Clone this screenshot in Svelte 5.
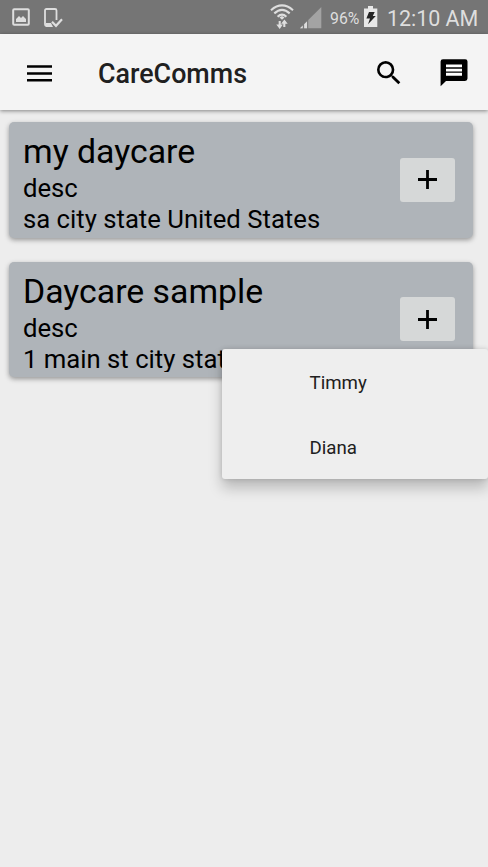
<script>
  const daycares = [
    { name: 'my daycare', description: 'desc', address: 'sa city state United States' },
    { name: 'Daycare sample', description: 'desc', address: '1 main st city state United States', children: ['Timmy', 'Diana'] }
  ];
</script>

<div class="screen">
  <div class="status">
    <svg class="picture" width="18" height="18" viewBox="0 0 18 18">
      <rect x="1.2" y="1.2" width="15.6" height="15.6" rx="1" fill="none" stroke="currentColor" stroke-width="2" />
      <path d="M4 14v-3l3-3 2 2 2-2 3 3v3z" fill="currentColor" />
    </svg>
    <svg class="device" width="20" height="20" viewBox="0 0 20 20">
      <path d="M7.5 18H3Q1 18 1 16V2.5Q1 1 2.5 1H11Q12.5 1 12.5 2.5V12" fill="none" stroke="currentColor" stroke-width="1.8" />
      <path d="M2 15h5l2 4H2z" fill="currentColor" />
      <path d="M8 13.8l4 4 6-6.6" fill="none" stroke="currentColor" stroke-width="2.2" />
    </svg>
    <span class="grow"></span>
    <svg class="wifi" width="24" height="26" viewBox="0 0 24 26">
      <g fill="none" stroke="currentColor" stroke-width="2.1">
        <path d="M1 6.2Q12-3.4 23 6.2M4.3 9.4Q12 2.4 19.7 9.4M7.6 12.7Q12 8.6 16.4 12.7" />
        <path d="M9.7 17v6M14.3 23v-6" />
      </g>
      <path d="M9.5 13.6l2.5-1.7 2.5 1.7-2.5 2.2z" fill="currentColor" />
      <path d="M6.3 20.6h6.6L9.7 25zM11.1 19.7h6.6l-3.3-4.2z" fill="currentColor" />
    </svg>
    <svg class="signal" width="22" height="22" viewBox="0 0 22 22">
      <path d="M21.3 0v21.2H0z" fill="#a3a3a3" />
      <path d="M0 21.2L2.8 18.4v2.8zM4.2 21.2v-4l2.8-2.8v6.8z" fill="#ddd" />
      <path d="M3.4 17v5M7.7 13v9" stroke="#777" />
    </svg>
    <span class="percent">96%</span>
    <svg class="battery" width="14" height="22" viewBox="0 0 14 22">
      <path d="M4 0h5v2.5h4.3V21H0V2.5h4z" fill="#e8e8e8" />
      <path d="M5 6h5.7L8.8 10h3L4 18.3 6 12.5H2.4z" fill="#242424" />
    </svg>
    <span class="clock">12:10 AM</span>
  </div>

  <header>
    <svg class="menu" width="25" height="17" viewBox="0 0 25 17"><path d="M0 1.5h25M0 8.5h25M0 15.3h25" stroke="#000" stroke-width="2.6" /></svg>
    <h1>CareComms</h1>
    <span class="grow"></span>
    <svg class="search" width="32" height="32" viewBox="0 0 24 24"><path d="M15.5 14h-.79l-.28-.27A6.471 6.471 0 0 0 16 9.5 6.5 6.5 0 1 0 9.5 16c1.61 0 3.09-.59 4.23-1.57l.27.28v.79l5 4.99L20.49 19l-4.99-5zm-6 0C7.01 14 5 11.99 5 9.5S7.01 5 9.5 5 14 7.01 14 9.5 11.99 14 9.5 14z" /></svg>
    <svg class="chat" width="28" height="28" viewBox="0 0 28 28">
      <path d="M3 .3h22.2Q27.5.3 27.5 2.6v17Q27.5 22 25 22H6L.6 27.2V2.6Q.6.3 3 .3z" />
      <path d="M6 6.9h16M6 11.1h16M6 15.3h16" stroke="#fff" stroke-width="2.9" />
    </svg>
  </header>

  <main>
    {#each daycares as daycare}
      <article>
        <div class="details">
          <h2>{daycare.name}</h2>
          <p>{daycare.description}</p>
          <p class="address">{daycare.address}</p>
        </div>
        <button aria-label="Add">
          <svg width="19" height="19" viewBox="0 0 19 19"><path d="M0 9.5h19M9.5 0v19" stroke="#000" stroke-width="2.8" /></svg>
        </button>
        {#if daycare.children}
          <div class="popup">
            {#each daycare.children as child}
              <div class="item">{child}</div>
            {/each}
          </div>
        {/if}
      </article>
    {/each}
  </main>
</div>

<style>
  :global(body) { margin: 0; }
  .screen { height: 867px; overflow: hidden; background: #ededed; font-family: Roboto, sans-serif; color: #000; }
  svg { display: block; flex: none; }
  .grow { flex: 1; }
  .status { height: 34px; box-sizing: border-box; display: flex; align-items: flex-start; background: #757575; color: #dedede; padding: 0 10px 0 12px; white-space: nowrap; }
  .picture { margin-top: 8px; }
  .device { margin: 8px 0 0 14px; }
  .wifi { margin: 4px 6px 0 0; }
  .signal { margin: 7px 8px 0 0; }
  .percent { font-size: 15.8px; line-height: 20px; margin-top: 9px; width: 34px; }
  .battery { margin-top: 6px; }
  .clock { font-size: 21.5px; line-height: 26px; margin: 6px 0 0 9px; width: 91px; letter-spacing: -0.05px; }
  header { position: relative; height: 76px; display: flex; align-items: center; padding: 0 20px 0 27px; box-sizing: border-box; background: #f4f4f4; box-shadow: 0 1px 4px rgba(0, 0, 0, .45); }
  .menu { margin-top: 2px; }
  h1 { margin: 3px 0 0 46px; font-size: 26.85px; line-height: 32px; font-weight: 500; color: #202020; }
  .search { margin: 2px 35px 0 0; }
  .chat { margin-top: 2px; }
  main { padding: 12px 15px 0 9px; display: flex; flex-direction: column; gap: 24px; }
  article { position: relative; height: 115.5px; box-sizing: border-box; display: flex; justify-content: space-between; border-radius: 5px; background: #afb4b9; padding: 10px 18px 0 14px; box-shadow: 0 2px 5px rgba(0, 0, 0, .36); }
  .details { white-space: nowrap; }
  h2, p { margin: 0; font-weight: 400; }
  h2 { font-size: 33.8px; line-height: 40px; margin-bottom: 1px; }
  p { font-size: 25.7px; line-height: 31px; }
  .address { height: 28px; overflow: hidden; }
  button { width: 55px; height: 44px; flex: none; margin-top: 25.5px; padding: 0; border: 0; border-radius: 3px; background: #d6d8d8; display: grid; place-items: center; }
  .popup { position: absolute; left: 213px; top: 87px; width: 266px; height: 130px; background: #eee; border-radius: 3px; box-shadow: 0 9px 14px rgba(0, 0, 0, .22), 0 0 5px rgba(0, 0, 0, .15); }
  .item { height: 65px; line-height: 68px; box-sizing: border-box; padding-left: 87.5px; font-size: 18.7px; color: #202020; }
</style>
